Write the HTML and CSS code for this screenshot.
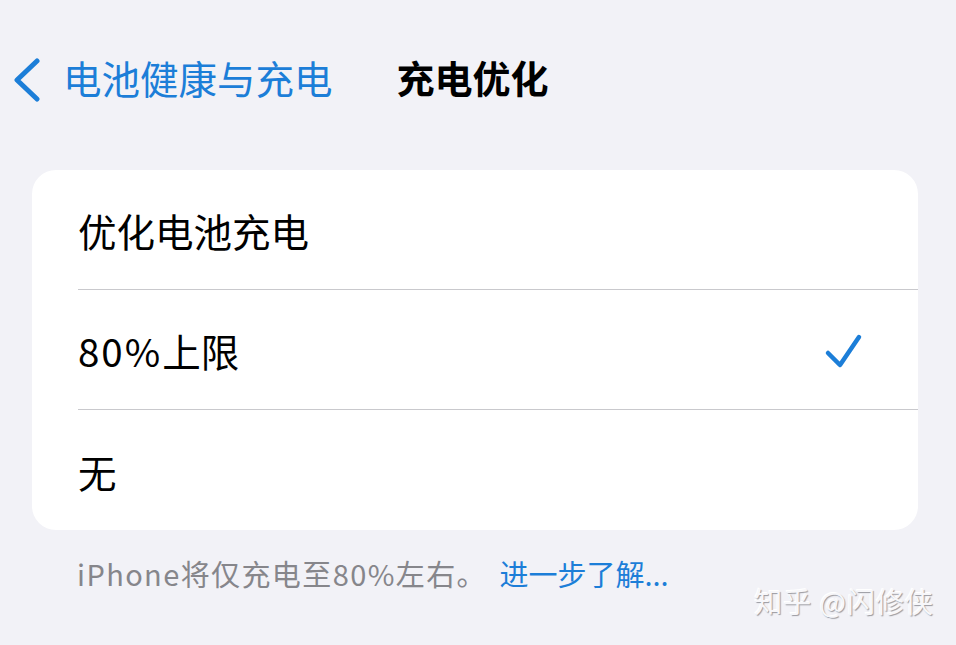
FILE: index.html
```html
<!DOCTYPE html>
<html lang="zh-CN">
<head>
    <meta charset="UTF-8">
    <meta name="viewport" content="width=device-width, initial-scale=1.0">
    <title>充电优化</title>
    <link rel="stylesheet" href="styles.css">
</head>
<body>
    <header class="nav">
        <a class="back" href="#">
            <svg class="chevron" width="30" height="44" viewBox="0 0 30 44">
                <path d="M25 3 L5 22 L25 41" fill="none" stroke="#1c7ed8" stroke-width="5" stroke-linecap="round" stroke-linejoin="round"/>
            </svg>
            <span class="back-label">电池健康与充电</span>
        </a>
        <h1 class="title">充电优化</h1>
    </header>

    <div class="card">
        <div class="row">
            <span class="row-label">优化电池充电</span>
        </div>
        <div class="row">
            <span class="row-label"><span class="num">80%</span>上限</span>
            <svg class="check" width="40" height="40" viewBox="0 0 40 40">
                <path d="M4 21 L16 33 L35 5" fill="none" stroke="#1c7ed8" stroke-width="4.5" stroke-linecap="round" stroke-linejoin="round"/>
            </svg>
        </div>
        <div class="row">
            <span class="row-label">无</span>
        </div>
    </div>

    <p class="footnote"><span class="note">iPhone将仅充电至80%左右。</span> <a class="more" href="#">进一步了解...</a></p>

    <div class="watermark">知乎 @闪修侠</div>
</body>
</html>
```

FILE: styles.css
```css
body {
    margin: 0;
    padding: 0;
    background-color: #f2f2f7;
    font-family: "Noto Sans CJK SC", "Noto Sans", sans-serif;
    color: #000;
    width: 956px;
    height: 645px;
    overflow: hidden;
    position: relative;
}
.nav {
    display: flex;
    align-items: center;
    height: 80px;
    margin-top: 37px;
    padding-left: 12px;
}
.back {
    display: flex;
    align-items: center;
    text-decoration: none;
    color: #1c7ed8;
}
.chevron {
    display: block;
    margin-top: 6px;
}
.back-label {
    font-size: 38.5px;
    margin-left: 21px;
    line-height: 1;
}
.title {
    margin: 0 0 0 64px;
    font-size: 38px;
    font-weight: 700;
    line-height: 1;
}
.card {
    background: #fff;
    margin: 53px 38px 0 32px;
    border-radius: 24px;
    overflow: hidden;
}
.row {
    height: 120px;
    margin-left: 46px;
    display: flex;
    align-items: center;
    justify-content: space-between;
    border-bottom: 1px solid #c9c9cd;
    box-sizing: border-box;
}
.row:last-child {
    border-bottom: none;
}
.row-label {
    font-size: 38.5px;
    line-height: 1;
    margin-top: 2px;
}
.num {
    letter-spacing: 2px;
}
.check {
    margin-right: 54px;
    margin-top: 4px;
}
.footnote {
    margin: 23px 0 0 77px;
    font-size: 29px;
    color: #86868b;
    line-height: 40px;
}
.note {
    letter-spacing: 1.4px;
}
.more {
    color: #1c7ed8;
    text-decoration: none;
    margin-left: 6px;
}
.watermark {
    position: absolute;
    right: 22px;
    bottom: 24px;
    font-size: 28px;
    color: #f7f7fa;
    text-shadow: 1px 1px 1px #9a9aa0, -1px -1px 0 #ffffff;
    letter-spacing: 1px;
}
```
